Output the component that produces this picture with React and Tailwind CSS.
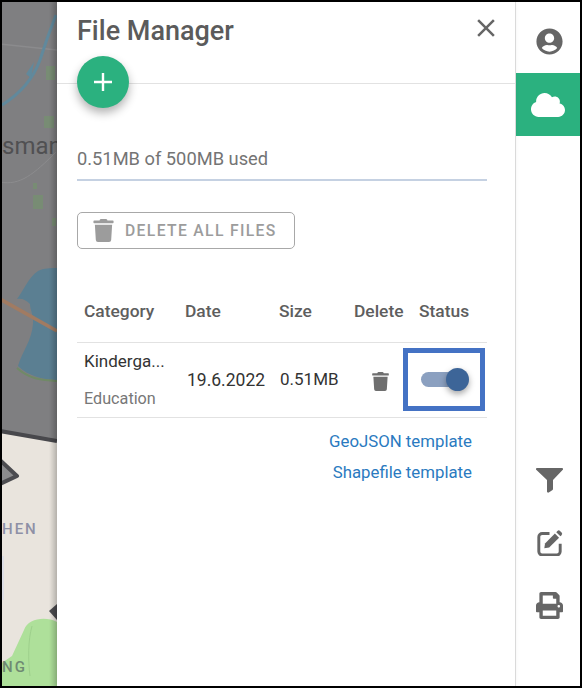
import React from "react";
import { FaUserCircle, FaCloud, FaPrint, FaTrash } from "react-icons/fa";

const font = { fontFamily: "Roboto, sans-serif" };

function MapStrip() {
  return (
    <div className="relative w-[55px] shrink-0 overflow-hidden bg-[#e9e4dd]">
      <svg className="absolute inset-0 h-full w-full" viewBox="2 2 55 684" preserveAspectRatio="none">
        <path d="M0 0H57V441L0 431Z" fill="#7f7f81" />
        <path d="M0 44L57 50" stroke="#8b8b8d" strokeWidth="1.5" fill="none" />
        <path d="M2 105C18 95 32 82 40 60C45 44 50 30 56 15" stroke="#61899c" strokeWidth="3" fill="none" />
        <path d="M26 74L34 62L31 78Z" fill="#61899c" />
        <path d="M46 66h9v14h-9zM44 116h10v12H44zM33 183h4v6h-4zM33 195h10v14H33zM52 218h4v8h-4z" fill="#788c74" />
        <path d="M0 182C20 186 34 174 56 152" stroke="#8c8c8e" strokeWidth="1" fill="none" />
        <path d="M17 299C24 290 28 278 38 271C44 268 50 268 57 268V380C44 380 28 376 18 366C22 352 32 340 33 324C34 316 30 310 30 304C26 300 22 298 17 299Z" fill="#5b7f92" />
        <path d="M17 368C30 380 44 380 57 381" stroke="#708a66" strokeWidth="2" fill="none" />
        <path d="M0 299L57 331" stroke="#a17b62" strokeWidth="3.5" fill="none" />
        <path d="M0 431L57 441" stroke="#48484c" strokeWidth="4" fill="none" />
        <path d="M0 460L17 476L0 484Z" fill="#8c8c8e" stroke="#4c4c50" strokeWidth="4" strokeLinejoin="round" />
        <path d="M57 604V620L49 611Z" fill="#4c4c50" />
        <path d="M0 688V664L12 656L24 630C28 618 46 616 57 622V688Z" fill="#aee09a" />
        <path d="M32 626C28 640 28 660 30 676" stroke="#9ed08c" strokeWidth="1" fill="none" />
        <path d="M2 556h2v44H2z" fill="#dcdde4" />
      </svg>
      <span className="absolute left-0 top-[130px] text-[24px] leading-7 text-[#505052]" style={font}>sman</span>
      <span className="absolute left-0 top-[517px] text-[15px] leading-5 font-medium tracking-[2px] text-[#8e90a6]" style={font}>HEN</span>
      <span className="absolute left-0 top-[655px] text-[15px] leading-5 font-medium tracking-[2px] text-[#6f8a72]" style={font}>NG</span>
      <div className="absolute inset-y-0 right-0 w-[8px] bg-gradient-to-r from-transparent to-[#00000022]" />
    </div>
  );
}

function Table() {
  const cols = "grid grid-cols-[101px_94px_75px_65px_1fr] pl-[7px]";
  return (
    <div className="ml-[20px] mr-[28px] mt-[44px] text-[17px]">
      <div className={`${cols} h-[50px] items-center border-b border-[#e2e2e2] pb-[13px] text-[17.4px] font-medium text-[#5e5e5e]`}>
        <span>Category</span>
        <span>Date</span>
        <span>Size</span>
        <span>Delete</span>
        <span>Status</span>
      </div>
      <div className={`${cols} relative h-[75px] items-center border-b border-[#e2e2e2]`}>
        <div className="flex h-full flex-col justify-between pb-[6px] pt-[6px]">
          <span className="text-[#333]">Kinderga...</span>
          <span className="text-[16.2px] text-[#777]">Education</span>
        </div>
        <span className="pl-[2px] text-[17.5px] text-[#333]">19.6.2022</span>
        <span className="pl-[1px] text-[#333]">0.51MB</span>
        <span className="pl-[17px] pt-[2px] text-[#6f6f6f]"><FaTrash size={19} /></span>
        <div className="relative h-[19px]">
          <div className="absolute left-[2px] top-[1px] h-[15px] w-[36px] rounded-full bg-[#8ba0c0]" />
          <div className="absolute left-[27px] top-[-3px] h-[23px] w-[23px] rounded-full bg-[#3d6598] shadow-[0_3px_6px_rgba(0,0,0,0.35)]" />
        </div>
        <div className="absolute left-[326px] top-[5px] h-[63px] w-[82px] border-[5px] border-[#4472c4]" />
      </div>
      <div className="mr-[15px] mt-[13px] flex flex-col items-end gap-[11px] text-[16.8px] text-[#2a7ac0]">
        <span className="leading-5">GeoJSON template</span>
        <span className="leading-5">Shapefile template</span>
      </div>
    </div>
  );
}

export default function App() {
  return (
    <div className="flex h-[688px] w-[582px] border-2 border-black bg-white" style={font}>
      <MapStrip />
      <main className="relative min-w-0 flex-1 shadow-[-2px_0_6px_rgba(0,0,0,0.15)]">
        <header className="relative flex h-[82px] items-start justify-between border-b border-[#e2e2e2] pl-[20px] pr-[21px] pt-[11px]">
          <h1 className="text-[27px] font-medium leading-9 text-[#5b5b5b]">File Manager</h1>
          <svg width="30" height="30" viewBox="0 0 24 24" className="mr-[-7px] fill-[#666]">
            <path d="M19 6.41L17.59 5 12 10.59 6.41 5 5 6.41 10.59 12 5 17.59 6.41 19 12 13.41 17.59 19 19 17.59 13.41 12z" />
          </svg>
          <div className="absolute left-[20px] top-[54px] flex h-[52px] w-[52px] items-center justify-center rounded-full bg-[#2bb17f] shadow-[0_5px_10px_rgba(0,0,0,0.3)]">
            <svg width="18" height="18" viewBox="0 0 18 18" className="fill-white"><path d="M7.8 0h2.4v7.8H18v2.4h-7.8V18H7.8v-7.8H0V7.8h7.8z" /></svg>
          </div>
        </header>
        <div className="ml-[20px] mr-[28px] mt-[63px] border-b-2 border-[#c5d1e2] pb-[8px] text-[18.3px] leading-6 text-[#747474]">0.51MB of 500MB used</div>
        <div className="ml-[20px] mt-[31px] flex h-[37px] w-[218px] items-center gap-[10px] rounded-[5px] border border-[#a8a8a8] pl-[14px] text-[#9c9c9c]">
          <FaTrash size={23} />
          <span className="text-[15.7px] font-medium tracking-[1.35px]">DELETE ALL FILES</span>
        </div>
        <Table />
      </main>
      <aside className="flex w-[65px] shrink-0 flex-col items-center border-l border-[#e2e2e2] text-[#666]">
        <div className="flex h-[71px] items-center justify-center pl-[2px] pt-[7px]"><FaUserCircle size={27} /></div>
        <div className="flex h-[63px] w-full items-center justify-center bg-[#2bb17f] text-white"><FaCloud size={34} /></div>
        <div className="mt-[332px] flex flex-col items-center gap-[36px] pl-[2px]">
          <svg width="27" height="25" viewBox="0 0 27 25" className="fill-[#666]">
            <path d="M1 0h25c1 0 1.5 1 .8 1.8L17 12v9c0 .6-.3 1-.8 1.3l-3.5 2.2c-.7.4-1.7-.1-1.7-1V12L.2 1.8C-.5 1 0 0 1 0z" />
          </svg>
          <svg width="27" height="27" viewBox="0 0 24 24" className="fill-[#666]">
            <path d="M12 4H5.5a3 3 0 0 0-3 3v13a3 3 0 0 0 3 3h13a3 3 0 0 0 3-3v-7" fill="none" stroke="#666" strokeWidth="2.6" />
            <path d="M8 12.8L16.8 4l3.7 3.7L11.7 16.5l-4.3.7z" />
            <path d="M18 2.8l1-1a1.7 1.7 0 0 1 2.4 0l1.3 1.3a1.7 1.7 0 0 1 0 2.4l-1 1z" />
          </svg>
          <FaPrint size={27} />
        </div>
      </aside>
    </div>
  );
}
